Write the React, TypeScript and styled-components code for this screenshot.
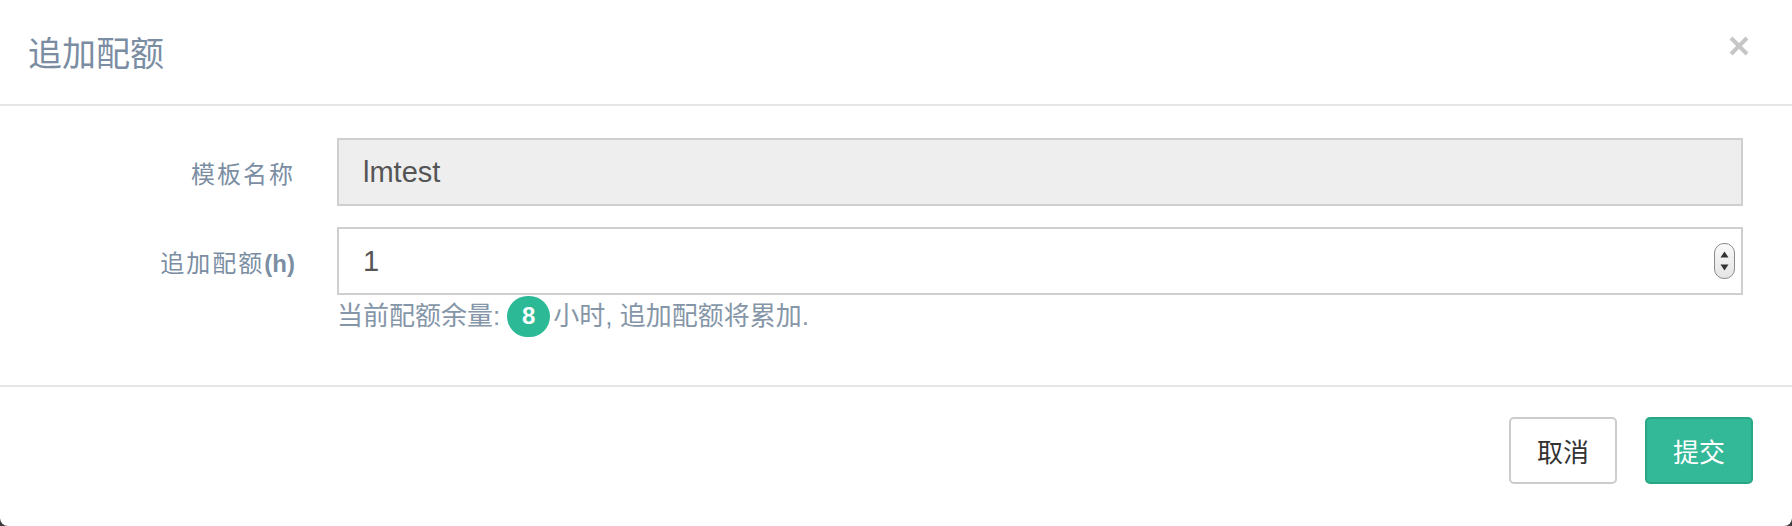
import React from 'react';
import styled, {createGlobalStyle} from 'styled-components';

const GlobalStyle = createGlobalStyle`
  html, body {
    margin: 0;
    padding: 0;
    background: #3a3a3a;
  }

  body {
    font-family: "Liberation Sans", "Noto Sans CJK SC", sans-serif;
  }
`;

const Modal = styled.div`
  width: 1792px;
  height: 526px;
  background: #fff;
  border-radius: 0 0 8px 8px;
  display: flex;
  flex-direction: column;
  overflow: hidden;
`;

const Header = styled.div`
  display: flex;
  align-items: center;
  justify-content: space-between;
  height: 106px;
  padding: 0 42px 0 28px;
  border-bottom: 2px solid #e5e5e5;
  box-sizing: border-box;
`;

const Title = styled.h4`
  margin: 0 0 2px;
  font-size: 34px;
  font-weight: 400;
  color: #7a8da2;
`;

const Close = styled.button`
  border: none;
  background: none;
  padding: 0;
  width: 22px;
  height: 22px;
  cursor: pointer;
  margin-bottom: 10px;
`;

const Body = styled.div`
  padding: 32px 49px 0 0;
  height: 281px;
  box-sizing: border-box;
  border-bottom: 2px solid #e5e5e5;
`;

const Row = styled.div`
  display: grid;
  grid-template-columns: 295px 1fr;
  column-gap: 42px;
  align-items: center;
  margin-bottom: 21px;
`;

const Label = styled.label`
  text-align: right;
  font-size: 24px;
  letter-spacing: 2px;
  color: #7b8ea3;

  b {
    letter-spacing: 0;
    font-weight: 700;
  }
`;

const Field = styled.div<{ $disabled?: boolean }>`
  display: flex;
  align-items: center;
  height: 68px;
  box-sizing: border-box;
  border: 2px solid #cfcfcf;
  background: ${p => p.$disabled ? '#eeeeee' : '#fff'};
  padding: 0 6px 0 24px;
`;

const Input = styled.input`
  flex: 1;
  border: none;
  outline: none;
  background: transparent;
  font-family: "Liberation Sans", "Noto Sans CJK SC", sans-serif;
  font-size: 29px;
  color: #555;
  padding: 0;
`;

const Spinner = styled.span`
  display: flex;
  flex-direction: column;
  align-items: center;
  justify-content: space-around;
  width: 21px;
  height: 36px;
  box-sizing: border-box;
  border: 1.5px solid #8a8a8a;
  border-radius: 10px;
  background: linear-gradient(#fafafa, #e4e4e4);
  padding: 4px 0;
`;

const Help = styled.div`
  grid-column: 2;
  display: flex;
  align-items: center;
  font-size: 26px;
  line-height: 42px;
  color: #8596a8;
`;

const Badge = styled.span`
  display: inline-flex;
  align-items: center;
  justify-content: center;
  width: 43px;
  height: 41px;
  margin: 0 3px 0 7px;
  border-radius: 21px;
  background: #2bb996;
  color: #fff;
  font-weight: 700;
  font-size: 24px;
`;

const Footer = styled.div`
  flex: 1;
  display: flex;
  justify-content: flex-end;
  align-items: flex-start;
  gap: 28px;
  padding: 30px 39px 0 0;
`;

const Button = styled.button<{ $primary?: boolean }>`
  width: 108px;
  height: 67px;
  border-radius: 5px;
  border: 2px solid ${p => p.$primary ? '#28a784' : '#cccccc'};
  background: ${p => p.$primary ? '#33b898' : '#fff'};
  color: ${p => p.$primary ? '#fff' : '#333'};
  font-family: "Liberation Sans", "Noto Sans CJK SC", sans-serif;
  font-size: 26px;
  cursor: pointer;
`;

const Arrow = ({up}: { up?: boolean }) => (
    <svg width="9" height="7" viewBox="0 0 9 7">
        <path d={up ? 'M4.5 0.5 L8.5 6.5 L0.5 6.5 Z' : 'M0.5 0.5 L8.5 0.5 L4.5 6.5 Z'} fill="#333"/>
    </svg>
);

export default function App() {
    return (
        <>
            <GlobalStyle/>
            <Modal>
                <Header>
                    <Title>追加配额</Title>
                    <Close aria-label="close">
                        <svg width="20" height="20" viewBox="0 0 20 20">
                            <path d="M2 2 L18 18 M18 2 L2 18" stroke="#c6c6c6" strokeWidth="4"/>
                        </svg>
                    </Close>
                </Header>
                <Body>
                    <Row>
                        <Label>模板名称</Label>
                        <Field $disabled>
                            <Input value="lmtest" disabled readOnly/>
                        </Field>
                    </Row>
                    <Row>
                        <Label>追加配额<b>(h)</b></Label>
                        <Field>
                            <Input value="1" readOnly/>
                            <Spinner>
                                <Arrow up/>
                                <Arrow/>
                            </Spinner>
                        </Field>
                        <Help>
                            当前配额余量: <Badge>8</Badge>小时, 追加配额将累加.
                        </Help>
                    </Row>
                </Body>
                <Footer>
                    <Button>取消</Button>
                    <Button $primary>提交</Button>
                </Footer>
            </Modal>
        </>
    );
}
